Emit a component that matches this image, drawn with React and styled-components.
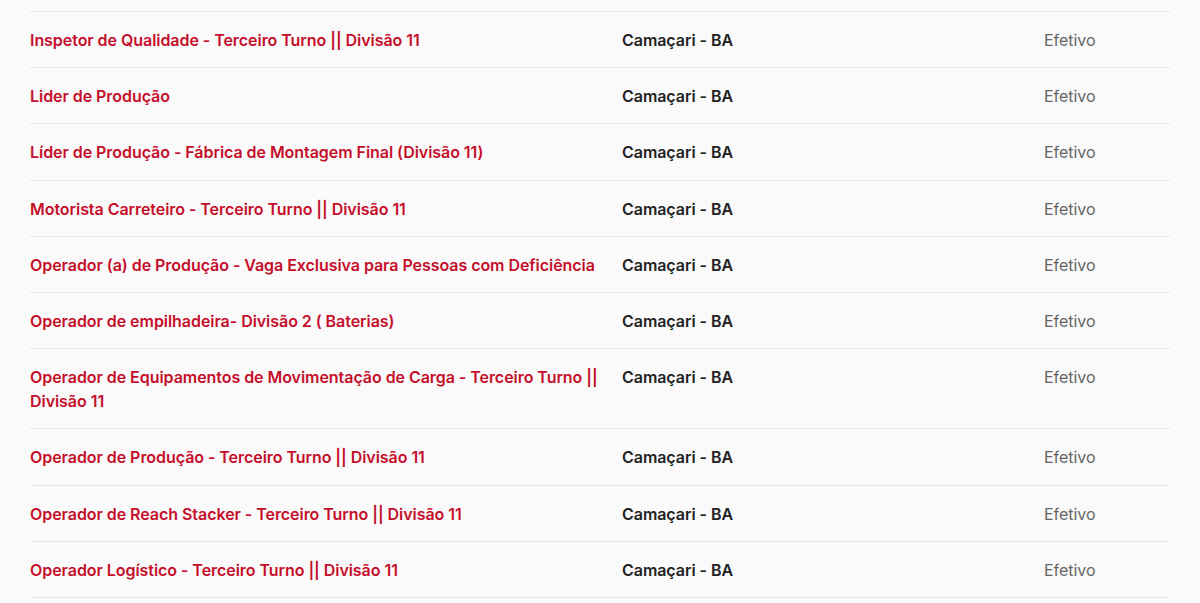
import React from "react";
import styled, { createGlobalStyle } from "styled-components";

const GlobalStyle = createGlobalStyle`
  html, body {
    margin: 0;
    padding: 0;
    background: #fafafa;
  }
  body {
    font-family: Inter, "Noto Sans", sans-serif;
  }
`;

const Page = styled.div`
  padding: 11px 30px 0;
`;

const List = styled.div`
  border-top: 1px solid #e6e6e6;
`;

const Row = styled.a`
  display: grid;
  grid-template-columns: 592px 422px 1fr;
  padding: 16px 0 15.2px;
  border-bottom: 1px solid #e6e6e6;
  text-decoration: none;
  font-size: 16px;
  line-height: 24px;
  letter-spacing: -0.05px;
`;

const Title = styled.span`
  color: #c50f2a;
  font-weight: 600;
  padding-right: 12px;
`;

const Place = styled.span`
  color: #222;
  font-weight: 600;
`;

const Kind = styled.span`
  color: #666;
  font-weight: 400;
`;

const jobs = [
  "Inspetor de Qualidade - Terceiro Turno || Divisão 11",
  "Lider de Produção",
  "Líder de Produção - Fábrica de Montagem Final (Divisão 11)",
  "Motorista Carreteiro - Terceiro Turno || Divisão 11",
  "Operador (a) de Produção - Vaga Exclusiva para Pessoas com Deficiência",
  "Operador de empilhadeira- Divisão 2 ( Baterias)",
  "Operador de Equipamentos de Movimentação de Carga - Terceiro Turno || Divisão 11",
  "Operador de Produção - Terceiro Turno || Divisão 11",
  "Operador de Reach Stacker - Terceiro Turno || Divisão 11",
  "Operador Logístico - Terceiro Turno || Divisão 11",
];

export default function App() {
  return (
    <>
      <GlobalStyle />
      <Page>
        <List>
          {jobs.map((job) => (
            <Row key={job} href="#">
              <Title>{job}</Title>
              <Place>Camaçari - BA</Place>
              <Kind>Efetivo</Kind>
            </Row>
          ))}
        </List>
      </Page>
    </>
  );
}
